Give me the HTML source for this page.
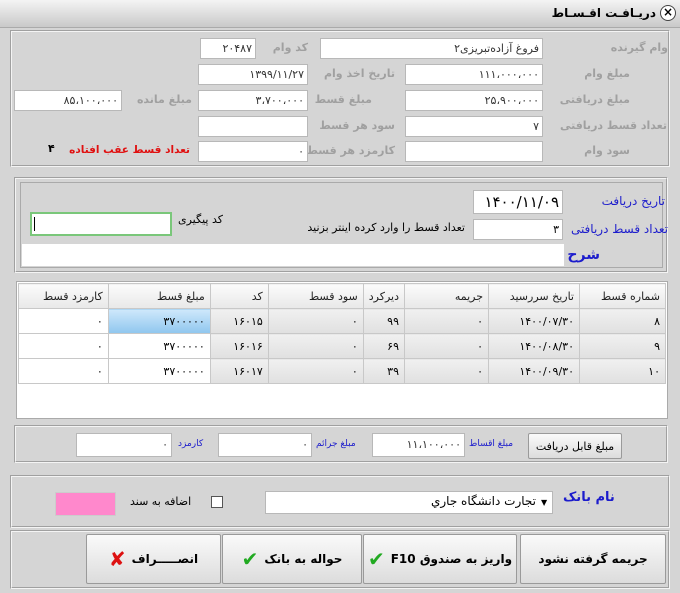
<!DOCTYPE html>
<html><head><meta charset="utf-8"><style>
*{box-sizing:border-box;margin:0;padding:0}
body{width:680px;height:593px;background:#d5d5d5;font-family:"DejaVu Sans",sans-serif;font-size:11px;position:relative;overflow:hidden;color:#000}
.a{position:absolute;white-space:nowrap}
.in{position:absolute;background:#fff;border:1px solid #b8b8b8;text-align:right;padding:2px 3px;font-size:11px;line-height:15px;color:#333;direction:rtl;white-space:nowrap}
.lbl{position:absolute;color:#a0a0a0;font-weight:bold;font-size:11px;direction:rtl;white-space:nowrap;letter-spacing:-0.3px}
.grp{position:absolute;border:2px groove #f4f4f4}
.blue{color:#1c1ccc}
table{border-collapse:collapse;position:absolute;left:18px;top:283px;width:648px;direction:rtl;font-size:11px}
td,th{height:25px;border:1px solid #c8c8c8;text-align:right;padding:0 5px;font-weight:normal}
th{background:linear-gradient(#fbfbfb,#e8e8e8);color:#222}
tr.r td{background:linear-gradient(#f0f0f0,#e0e0e0)}
.btn{position:absolute;background:linear-gradient(#fafafa,#dcdcdc);border:1px solid #9a9a9a;border-radius:2px;font-weight:bold;font-size:12px;display:flex;align-items:center;justify-content:center;gap:6px;direction:rtl}
</style></head><body>
<div class="a" style="left:0;top:0;width:680px;height:28px;background:linear-gradient(#f4f4f4,#c9c9c9);border-bottom:1px solid #aaa"></div>
<div class="a" style="left:660px;top:5px;width:16px;height:16px;border-radius:50%;border:1px solid #444;background:#fff;font-size:12px;line-height:13px;text-align:center;font-weight:bold">×</div>
<div class="a" style="right:24px;top:6px;font-weight:bold;font-size:12px;direction:rtl">دریـافـت اقـسـاط</div>

<div class="grp" style="left:10px;top:30px;width:660px;height:137px"></div>
<div class="lbl" style="right:12px;top:41px">وام گیرنده</div>
<div class="in" style="left:320px;top:38px;width:223px;height:21px">فروغ آزاده‌تبریزی۲</div>
<div class="lbl" style="right:372px;top:41px">کد وام</div>
<div class="in" style="left:200px;top:38px;width:56px;height:21px">۲۰۴۸۷</div>

<div class="lbl" style="right:50px;top:67px">مبلغ وام</div>
<div class="in" style="left:405px;top:64px;width:138px;height:21px">۱۱۱،۰۰۰،۰۰۰</div>
<div class="lbl" style="right:285px;top:67px">تاریخ اخذ وام</div>
<div class="in" style="left:198px;top:64px;width:110px;height:21px">۱۳۹۹/۱۱/۲۷</div>

<div class="lbl" style="right:50px;top:93px">مبلغ دریافتی</div>
<div class="in" style="left:405px;top:90px;width:138px;height:21px">۲۵،۹۰۰،۰۰۰</div>
<div class="lbl" style="right:308px;top:93px">مبلغ قسط</div>
<div class="in" style="left:198px;top:90px;width:110px;height:21px">۳،۷۰۰،۰۰۰</div>
<div class="lbl" style="right:488px;top:93px">مبلغ مانده</div>
<div class="in" style="left:14px;top:90px;width:108px;height:21px">۸۵،۱۰۰،۰۰۰</div>

<div class="lbl" style="right:13px;top:119px">تعداد قسط دریافتی</div>
<div class="in" style="left:405px;top:116px;width:138px;height:21px">۷</div>
<div class="lbl" style="right:285px;top:119px">سود هر قسط</div>
<div class="in" style="left:198px;top:116px;width:110px;height:21px"></div>

<div class="lbl" style="right:50px;top:144px">سود وام</div>
<div class="in" style="left:405px;top:141px;width:138px;height:21px"></div>
<div class="lbl" style="right:285px;top:144px">کارمزد هر قسط</div>
<div class="in" style="left:198px;top:141px;width:110px;height:21px">۰</div>
<div class="lbl" style="right:490px;top:144px;color:#e01010;font-size:10.5px">تعداد قسط عقب افتاده</div>
<div class="a" style="left:48px;top:142px;font-weight:bold">۴</div>

<div class="grp" style="left:14px;top:177px;width:654px;height:96px"></div>
<div class="a" style="left:20px;top:182px;width:643px;height:86px;border:1px solid #aaa"></div>
<div class="a blue" style="right:15px;top:194px;font-size:12px;direction:rtl">تاریخ دریافت</div>
<div class="in" style="left:473px;top:190px;width:90px;height:24px;font-size:15px;line-height:18px;color:#000">۱۴۰۰/۱۱/۰۹</div>
<div class="a blue" style="right:12px;top:222px;font-size:12px;direction:rtl">تعداد قسط دریافتی</div>
<div class="in" style="left:473px;top:219px;width:90px;height:21px;color:#000">۳</div>
<div class="a" style="right:215px;top:221px;font-size:11px;direction:rtl">تعداد قسط را وارد کرده اینتر بزنید</div>
<div class="a" style="left:178px;top:213px;font-size:11px;direction:rtl">کد پیگیری</div>
<div class="a" style="left:30px;top:212px;width:142px;height:24px;border:2px solid #7ac77a;background:#fff"><div style="position:absolute;left:2px;top:3px;width:1px;height:14px;background:#000"></div></div>
<div class="a" style="left:22px;top:244px;width:542px;height:22px;background:#fff"></div>
<div class="a blue" style="right:80px;top:247px;font-size:14px;font-weight:bold">شرح</div>

<div class="a" style="left:16px;top:281px;width:652px;height:138px;background:#fff;border:1px solid #aaa"></div>
<table>
<tr><th style="width:86px">شماره قسط</th><th style="width:91px">تاریخ سررسید</th><th style="width:84px">جریمه</th><th style="width:40px">دیرکرد</th><th style="width:95px">سود قسط</th><th style="width:58px">کد</th><th style="width:102px">مبلغ قسط</th><th>کارمزد قسط</th></tr>
<tr class="r"><td>۸</td><td>۱۴۰۰/۰۷/۳۰</td><td>۰</td><td>۹۹</td><td>۰</td><td>۱۶۰۱۵</td><td style="background:linear-gradient(#cfe8fb,#8fc6ee)">۳۷۰۰۰۰۰</td><td style="background:#fff">۰</td></tr>
<tr class="r"><td>۹</td><td>۱۴۰۰/۰۸/۳۰</td><td>۰</td><td>۶۹</td><td>۰</td><td>۱۶۰۱۶</td><td style="background:#fff">۳۷۰۰۰۰۰</td><td style="background:#fff">۰</td></tr>
<tr class="r"><td>۱۰</td><td>۱۴۰۰/۰۹/۳۰</td><td>۰</td><td>۳۹</td><td>۰</td><td>۱۶۰۱۷</td><td style="background:#fff">۳۷۰۰۰۰۰</td><td style="background:#fff">۰</td></tr>
</table>

<div class="grp" style="left:14px;top:425px;width:654px;height:38px"></div>
<div class="btn" style="left:528px;top:433px;width:94px;height:26px;font-weight:normal;font-size:11px">مبلغ قابل دریافت</div>
<div class="a blue" style="left:469px;top:439px;font-size:9px">مبلغ اقساط</div>
<div class="in" style="left:372px;top:433px;width:93px;height:24px;line-height:18px">۱۱،۱۰۰،۰۰۰</div>
<div class="a blue" style="left:316px;top:439px;font-size:9px">مبلغ جرائم</div>
<div class="in" style="left:218px;top:433px;width:94px;height:24px;line-height:18px">۰</div>
<div class="a blue" style="left:178px;top:439px;font-size:9px">کارمزد</div>
<div class="in" style="left:76px;top:433px;width:96px;height:24px;line-height:18px">۰</div>

<div class="grp" style="left:10px;top:475px;width:660px;height:53px"></div>
<div class="a blue" style="left:563px;top:490px;font-size:13px;font-weight:bold">نام بانک</div>
<div class="in" style="left:265px;top:491px;width:288px;height:23px;color:#000;font-size:12px;padding-right:16px">تجارت دانشگاه جاري</div>
<div class="a" style="left:541px;top:498px;font-size:8px">▼</div>
<div class="a" style="left:211px;top:496px;width:12px;height:12px;border:1px solid #555;background:#fff"></div>
<div class="a" style="left:130px;top:495px;direction:rtl;font-size:11px">اضافه به سند</div>
<div class="a" style="left:55px;top:492px;width:61px;height:24px;background:#ff88cc;border:1px solid #ccc"></div>

<div class="grp" style="left:10px;top:530px;width:660px;height:59px"></div>
<div class="btn" style="left:520px;top:534px;width:146px;height:50px">جریمه گرفته نشود</div>
<div class="btn" style="left:363px;top:534px;width:154px;height:50px">واریز به صندوق F10 <span style="color:#2a2;font-size:20px">✔</span></div>
<div class="btn" style="left:222px;top:534px;width:140px;height:50px">حواله به بانک <span style="color:#2a2;font-size:20px">✔</span></div>
<div class="btn" style="left:86px;top:534px;width:135px;height:50px">انصـــــراف <span style="color:#d11;font-size:20px">✘</span></div>
</body></html>
